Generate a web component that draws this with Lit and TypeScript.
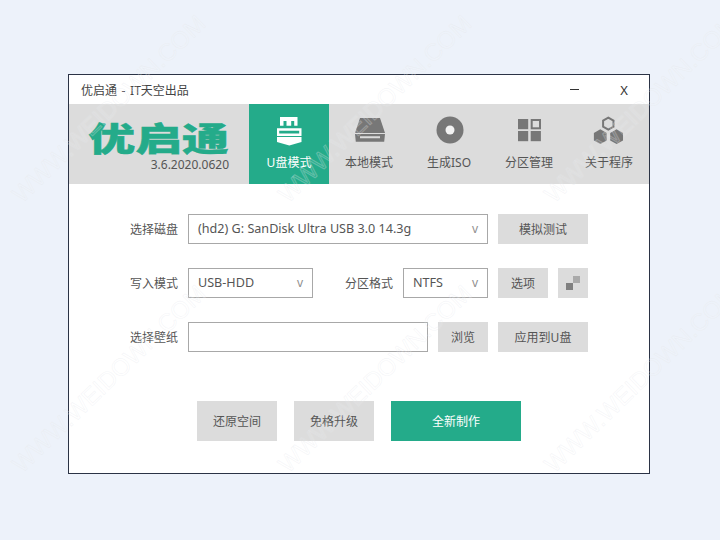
import { LitElement, html, css, svg } from "lit";
import { customElement } from "lit/decorators.js";

const hex = (cx: number, cy: number, r: number) =>
  [0, 60, 120, 180, 240, 300]
    .map((a) => {
      const t = (a * Math.PI) / 180;
      return `${(cx + r * Math.sin(t)).toFixed(2)},${(cy - r * Math.cos(t)).toFixed(2)}`;
    })
    .join(" ");

const ICONS = {
  usb: svg`<path fill="currentColor" fill-rule="evenodd" d="M11 3h17.5v8.7h-3.3V7h-3v4.7h-4.7V7h-3v4.7H11z"/>
    <path fill="currentColor" fill-rule="evenodd" d="M8 14.2h24.5v7.9H8zM10.2 16.7v2.7h20v-2.7z"/>
    <path fill="currentColor" d="M8 23h24.5v5l-12.2 3.4L8 28z"/>`,
  hdd: svg`<path fill="currentColor" d="M11 4h20l5 15H6z"/>
    <path fill="currentColor" fill-rule="evenodd" d="M6 20h30l-.8 7.7H6.8zM11 22.3v2h20v-2z"/>`,
  disc: svg`<circle cx="21" cy="16" r="13.5" fill="currentColor"/><circle cx="21" cy="16" r="4.5" fill="#f2f2f2"/>`,
  grid: svg`<rect x="9" y="5" width="10.2" height="10.2" fill="currentColor"/>
    <rect x="22.7" y="6" width="8.3" height="8.3" fill="none" stroke="currentColor" stroke-width="2"/>
    <rect x="9" y="17" width="10.2" height="10.2" fill="currentColor"/>
    <rect x="21.7" y="17" width="10.2" height="10.2" fill="currentColor"/>`,
  hex: svg`<polygon points=${hex(19.3, 9.7, 6)} fill="none" stroke="currentColor" stroke-width="2"/>
    <polygon points=${hex(11.3, 22.7, 7.4)} fill="currentColor"/>
    <polygon points=${hex(27.6, 22.7, 7.4)} fill="currentColor"/>`,
};

const TABS = [
  { label: "U盘模式", icon: ICONS.usb, active: true },
  { label: "本地模式", icon: ICONS.hdd },
  { label: "生成ISO", icon: ICONS.disc },
  { label: "分区管理", icon: ICONS.grid },
  { label: "关于程序", icon: ICONS.hex },
];

const MARKS = [0, 1, 2].flatMap((c) => [0, 1].map((r) => [22 + c * 266, 204 + r * 270]));

@customElement("app-root")
export class AppRoot extends LitElement {
  static styles = css`
    :host {
      display: block;
      position: relative;
      width: 720px;
      height: 540px;
      box-sizing: border-box;
      padding: 74px 0 0 68px;
      overflow: hidden;
      background: #edf2fa;
      color: #555;
      font: 12px "Noto Sans", "Noto Sans CJK SC", sans-serif;
    }
    .window {
      width: 580px;
      border: 1px solid #2b3345;
      background: #fff;
    }
    .titlebar {
      height: 29px;
      display: flex;
      align-items: center;
      padding-left: 12px;
      color: #444;
    }
    .title { flex: 1; word-spacing: 1.5px; }
    .win-btn {
      width: 50px;
      display: flex;
      justify-content: center;
      align-items: center;
      font-size: 13px;
      color: #333;
    }
    .minus { width: 9px; height: 1px; background: #333; }
    .band { height: 80px; display: flex; background: #dcdcdc; }
    .brand {
      width: 180px;
      box-sizing: border-box;
      padding: 16px 20px 0 0;
      display: flex;
      flex-direction: column;
      align-items: flex-end;
      overflow: hidden;
    }
    .logo {
      font-size: 46px;
      line-height: 46px;
      height: 37px;
      font-weight: 900;
      color: #24ab8a;
      font-family: "Noto Sans CJK SC", sans-serif;
      -webkit-text-stroke: 0.6px #24ab8a;
      transform: scale(1.02, 0.72);
      transform-origin: right top;
      white-space: nowrap;
    }
    .version { font-size: 12px; line-height: 16px; color: #555; }
    .tab {
      width: 80px;
      box-sizing: border-box;
      padding-top: 10px;
      display: flex;
      flex-direction: column;
      align-items: center;
      color: #777;
    }
    .tab span { color: #555; line-height: 16px; margin-top: 7px; }
    .tab svg { display: block; width: 40px; height: 34px; }
    .tab.active { background: #24ab8a; color: #fff; }
    .tab.active span { color: #fff; }
    .form {
      padding: 30px 0 0 60px;
      display: flex;
      flex-direction: column;
      gap: 24px;
    }
    .row { display: flex; align-items: center; gap: 10px; height: 30px; }
    .label { width: 49px; white-space: nowrap; text-align: right; }
    .label.far { margin-left: 22px; width: 48px; }
    .field {
      box-sizing: border-box;
      height: 30px;
      border: 1px solid #a8a8a8;
      padding: 0 9px 1px;
      display: flex;
      align-items: center;
      justify-content: space-between;
      font-size: 12.6px;
      background: #fff;
    }
    .w300 { width: 300px; }
    .w240 { width: 240px; }
    .w125 { width: 125px; }
    .w85 { width: 85px; }
    .chev { color: #909090; font-size: 12px; }
    .btn {
      height: 30px;
      background: #dcdcdc;
      display: flex;
      align-items: center;
      justify-content: center;
      color: #555;
    }
    .b90 { width: 90px; }
    .b50 { width: 50px; }
    .b30 { width: 30px; }
    .pix { display: block; }
    .actions {
      padding: 49px 0 32px 128px;
      display: flex;
      gap: 17px;
    }
    .actions .btn { height: 40px; width: 80px; }
    .actions .primary { width: 130px; background: #24ab8a; color: #fff; }
    .marks {
      position: absolute;
      inset: 0;
      pointer-events: none;
    }
    .marks text { font: 24px "Liberation Sans", sans-serif; }
    .marks .glow {
      fill: rgba(255, 255, 255, 0.03);
      stroke: rgba(255, 255, 255, 0.2);
      stroke-width: 1.2;
    }
    .marks .line {
      fill: none;
      stroke: rgba(200, 205, 215, 0.2);
      stroke-width: 0.6;
    }
  `;

  render() {
    return html`
      <div class="window">
        <div class="titlebar">
          <div class="title">优启通 - IT天空出品</div>
          <div class="win-btn"><div class="minus"></div></div>
          <div class="win-btn">X</div>
        </div>
        <div class="band">
          <div class="brand">
            <div class="logo">优启通</div>
            <div class="version">3.6.2020.0620</div>
          </div>
          ${TABS.map(
            (t) => html`<div class="tab ${t.active ? "active" : ""}">
              <svg viewBox="0 0 40 34">${t.icon}</svg>
              <span>${t.label}</span>
            </div>`
          )}
        </div>
        <div class="form">
          <div class="row">
            <div class="label">选择磁盘</div>
            <div class="field w300">(hd2) G: SanDisk Ultra USB 3.0 14.3g<span class="chev">v</span></div>
            <div class="btn b90">模拟测试</div>
          </div>
          <div class="row">
            <div class="label">写入模式</div>
            <div class="field w125">USB-HDD<span class="chev">v</span></div>
            <div class="label far">分区格式</div>
            <div class="field w85">NTFS<span class="chev">v</span></div>
            <div class="btn b50">选项</div>
            <div class="btn b30">
              <svg class="pix" width="14" height="14" viewBox="0 0 14 14">
                <rect x="7" y="0" width="7" height="7" fill="#aaa"></rect>
                <rect x="0" y="7" width="7" height="7" fill="#808080"></rect>
              </svg>
            </div>
          </div>
          <div class="row">
            <div class="label">选择壁纸</div>
            <div class="field w240"></div>
            <div class="btn b50">浏览</div>
            <div class="btn b90">应用到U盘</div>
          </div>
        </div>
        <div class="actions">
          <div class="btn">还原空间</div>
          <div class="btn">免格升级</div>
          <div class="btn primary">全新制作</div>
        </div>
      </div>
      <svg class="marks" width="720" height="540" viewBox="0 0 720 540" aria-hidden="true">
        ${MARKS.map(
          ([x, y]) => svg`<g transform="rotate(-44 ${x} ${y})">
            <text class="glow" x=${x} y=${y}>WWW.WEIDOWN.COM</text>
            <text class="line" x=${x} y=${y}>WWW.WEIDOWN.COM</text>
          </g>`
        )}
      </svg>
    `;
  }
}
